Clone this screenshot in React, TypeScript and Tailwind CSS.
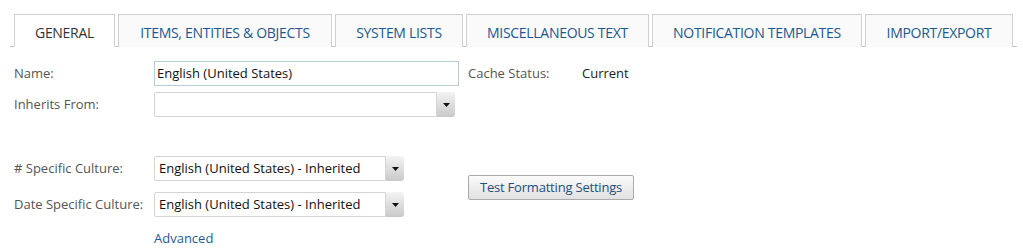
import React from "react";

const tabs = [
  { label: "GENERAL", w: "w-[101px]", active: true },
  { label: "ITEMS, ENTITIES & OBJECTS", w: "w-[214px]" },
  { label: "SYSTEM LISTS", w: "w-[128px]" },
  { label: "MISCELLANEOUS TEXT", w: "w-[183px]" },
  { label: "NOTIFICATION TEMPLATES", w: "w-[210px]" },
  { label: "IMPORT/EXPORT", w: "w-[148px]" },
];

function Arrow() {
  return (
    <div className="w-[18px] h-full rounded-r-[3px] bg-gradient-to-b from-[#f4f4f4] to-[#c9c9c9] flex items-center justify-center">
      <svg width="7" height="4" viewBox="0 0 7 4">
        <path d="M0 0H7L3.5 4Z" fill="#111" />
      </svg>
    </div>
  );
}

function Select({ value, w }: { value: string; w: string }) {
  return (
    <div className={`flex h-[25px] ${w}`}>
      <div className="flex-1 border border-[#d4d4d4] bg-white flex items-center pl-[4px] text-[13px] text-[#111] rounded-l-[2px]">
        {value}
      </div>
      <Arrow />
    </div>
  );
}

export default function App() {
  return (
    <div className="w-[1023px] h-[248px] bg-white font-['Open_Sans','Noto_Sans',sans-serif] text-[13px] overflow-hidden">
      <div className="pt-[14px] pl-[10px] pr-[6px]">
        <div className="flex gap-[3px] pl-[4px] border-b border-[#c4c4c4] h-[33px]">
          {tabs.map((t) => (
            <div
              key={t.label}
              className={`${t.w} h-[33px] flex items-center justify-center pt-[3px] border border-[#cfcfcf] text-[14px] ${
                t.active
                  ? "bg-white border-b-white text-[#333] relative z-10"
                  : "bg-[#fafafa] border-b-0 h-[32px] text-[#21578f]"
              } tracking-[-0.3px]`}
            >
              {t.label}
            </div>
          ))}
        </div>
      </div>

      <div className="pl-[14px] pt-[14px] flex text-[#555]">
        <div className="flex flex-col">
          <div className="flex items-center h-[25px]">
            <div className="w-[140px]">Name:</div>
            <div className="w-[305px] h-[25px] border border-[#b8cde0] bg-white flex items-center pl-[2px] text-[#111]">
              English (United States)
            </div>
          </div>
          <div className="flex items-center h-[25px] mt-[6px]">
            <div className="w-[140px]">Inherits From:</div>
            <Select value="" w="w-[301px]" />
          </div>
          <div className="flex items-center h-[25px] mt-[39px]">
            <div className="w-[140px]"># Specific Culture:</div>
            <Select value="English (United States) - Inherited" w="w-[250px]" />
          </div>
          <div className="flex items-center h-[25px] mt-[11px]">
            <div className="w-[140px] whitespace-nowrap">Date Specific Culture:</div>
            <Select value="English (United States) - Inherited" w="w-[250px]" />
          </div>
          <div className="pl-[140px] mt-[12px] text-[#1f5a96]">Advanced</div>
        </div>
        <div className="flex flex-col ml-[9px]">
          <div className="flex items-center h-[25px]">
            <div className="w-[114px]">Cache Status:</div>
            <div className="text-[#222]">Current</div>
          </div>
          <button className="mt-[89px] w-[166px] h-[25px] pt-[1px] border border-[#aaa] rounded-[2px] bg-gradient-to-b from-[#fbfbfb] to-[#e1e1e1] text-[#1f4e80] text-[13px] tracking-[-0.2px]">
            Test Formatting Settings
          </button>
        </div>
      </div>
    </div>
  );
}
